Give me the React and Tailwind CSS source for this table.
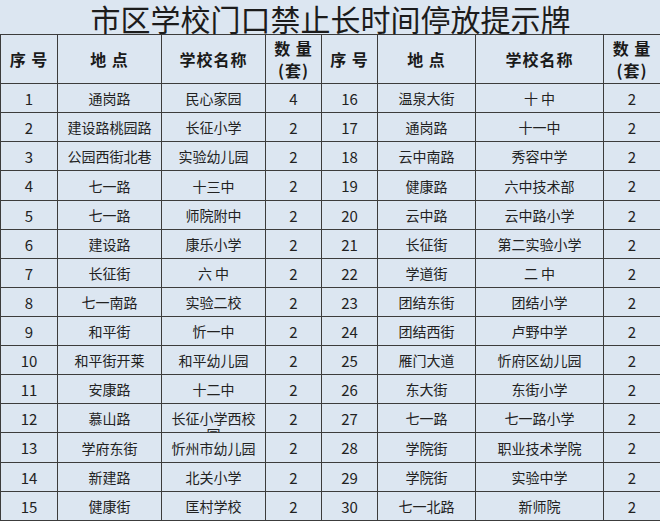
const left = [
  ['1', '通岗路', '民心家园', '4'],
  ['2', '建设路桃园路', '长征小学', '2'],
  ['3', '公园西街北巷', '实验幼儿园', '2'],
  ['4', '七一路', '十三中', '2'],
  ['5', '七一路', '师院附中', '2'],
  ['6', '建设路', '康乐小学', '2'],
  ['7', '长征街', '六 中', '2'],
  ['8', '七一南路', '实验二校', '2'],
  ['9', '和平街', '忻一中', '2'],
  ['10', '和平街开莱', '和平幼儿园', '2'],
  ['11', '安康路', '十二中', '2'],
  ['12', '慕山路', '长征小学西校园', '2'],
  ['13', '学府东街', '忻州市幼儿园', '2'],
  ['14', '新建路', '北关小学', '2'],
  ['15', '健康街', '匡村学校', '2'],
];

const right = [
  ['16', '温泉大街', '十 中', '2'],
  ['17', '通岗路', '十一中', '2'],
  ['18', '云中南路', '秀容中学', '2'],
  ['19', '健康路', '六中技术部', '2'],
  ['20', '云中路', '云中路小学', '2'],
  ['21', '长征街', '第二实验小学', '2'],
  ['22', '学道街', '二 中', '2'],
  ['23', '团结东街', '团结小学', '2'],
  ['24', '团结西街', '卢野中学', '2'],
  ['25', '雁门大道', '忻府区幼儿园', '2'],
  ['26', '东大街', '东街小学', '2'],
  ['27', '七一路', '七一路小学', '2'],
  ['28', '学院街', '职业技术学院', '2'],
  ['29', '学院街', '实验中学', '2'],
  ['30', '七一北路', '新师院', '2'],
];

// row heights incl. bottom border
const heights = [29, 29, 29, 30, 29, 29, 29, 29, 29, 29, 29, 29, 30, 29, 29];

const font = { fontFamily: '"Noto Sans CJK SC", "Noto Sans", sans-serif' };

const Cell = ({ children, h, wrap, num }) => (
  <div
    className={`border-r border-b border-[#3c3c3c] overflow-hidden flex justify-center text-[#222] ${
      num ? 'text-[15px]' : 'text-[14px]'
    } ${
      wrap ? 'items-start pt-[6px] px-[5px] leading-[16px] text-center' : 'items-center leading-none whitespace-nowrap'
    }`}
    style={{ height: h }}
  >
    {children}
  </div>
);

const Head = ({ children }) => (
  <div className="h-[49px] border-r border-b border-[#3c3c3c] flex flex-col items-center justify-center text-[16px] font-bold text-[#1a1a1a] leading-[22px] tracking-[1px]">
    {children}
  </div>
);

export default function App() {
  const rows = left.map((l, i) => [...l, ...right[i]]);
  return (
    <div className="w-[660px] h-[521px] overflow-hidden bg-[#dce6f1]" style={font}>
      <div className="h-[34px] flex justify-center">
        <h1 className="text-[30px] leading-[36px] font-normal text-[#1c1c1c] pl-[1px] whitespace-nowrap">
          市区学校门口禁止长时间停放提示牌
        </h1>
      </div>
      <div className="w-[661px] border-l border-t border-[#3c3c3c] grid grid-cols-[57px_104px_104px_56px_56px_98px_128px_57px]">
        {[0, 1].map((k) => (
          <div key={k} className="contents">
            <Head>序 号</Head>
            <Head>地 点</Head>
            <Head>学校名称</Head>
            <Head>
              <span>数 量</span>
              <span>(套)</span>
            </Head>
          </div>
        ))}
        {rows.map((r, i) =>
          r.map((c, j) => (
            <Cell
              key={`${i}-${j}`}
              h={heights[i]}
              wrap={c === '长征小学西校园'}
              num={/^\d+$/.test(c)}
            >
              {c}
            </Cell>
          ))
        )}
      </div>
    </div>
  );
}
